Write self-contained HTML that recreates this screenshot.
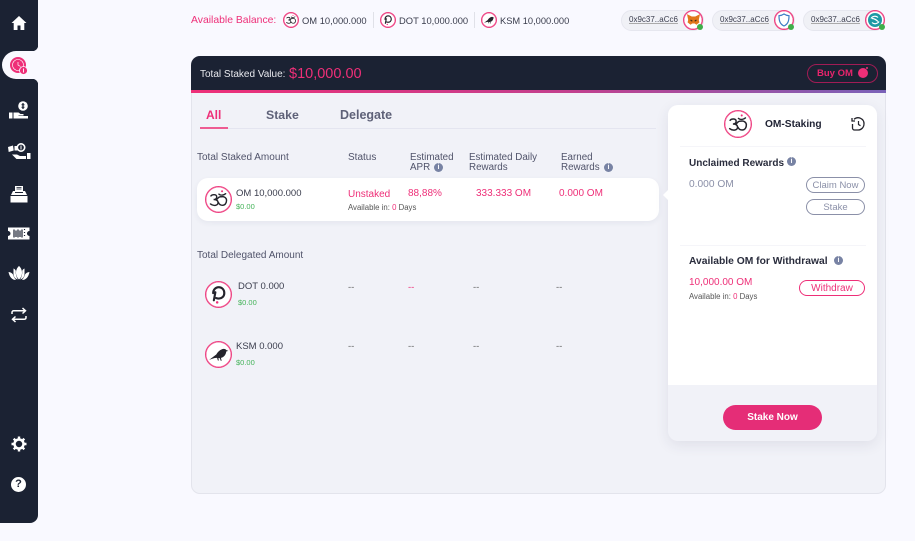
<!DOCTYPE html>
<html><head><meta charset="utf-8"><style>
html,body{margin:0;padding:0;width:915px;height:541px;overflow:hidden;background:#f9f9ff;font-family:"Liberation Sans",sans-serif;color:#3a3d4d}
div,span.a,svg{position:absolute}
.t{position:absolute;white-space:nowrap;line-height:14px;font-size:10px}
.p{color:#ee2f78}.g{color:#45b35a}.b{font-weight:700}
.m{color:#7c8198}.i{position:absolute;width:9px;height:9px;border-radius:50%;background:#7883a4;color:#fff;font:700 7px/9px "Liberation Sans",sans-serif;text-align:center}
.c{position:absolute;border:1px solid #ee3f80;border-radius:50%;background:#fff;box-sizing:border-box;box-shadow:inset 0 0 0 .4px #ee3f80}
.pill{position:absolute;box-sizing:border-box;height:16px;border-radius:8px;text-align:center;font-size:9.500px;line-height:15px;white-space:nowrap}
.w{position:absolute;width:83px;height:21px;top:10px;background:#f0f1f6;border:1px solid #e6e7ef;border-radius:11px;box-sizing:border-box}
.dot{position:absolute;width:6px;height:6px;border-radius:50%;background:#3fae4a;border:0}
.h{color:#50536a;line-height:10px;font-size:9.800px}
.u{font-size:8px;text-decoration:underline;text-decoration-color:#aaa}
</style></head><body>
<svg width="0" height="0" style="position:absolute"><defs>
<symbol id="om" viewBox="0 0 28 28"><g fill="none" stroke="#24242c" stroke-width="1.600" stroke-linecap="round"><path d="M5.500 10c1.500-2 6.500-2 6.500 1 0 2.200-2 3-3.500 3 3 0 5 1 5 3.500 0 3-4.500 4.500-8.500 1.500"/><path d="M12 14c1.500-2 3-3.500 5-3 3-.8 6 1 6 4 0 3.500-2 5.500-4.500 5.500-2.200 0-3.800-1.300-4.500-3"/><path d="M14.500 8c2 1.500 5 1.500 7.500-.5"/></g><circle cx="18" cy="4.800" r="1.100" fill="#ee2f78"/></symbol>
<symbol id="dot" viewBox="0 0 28 28"><path d="M8 12.500C8 8.500 10.800 5.800 14.300 5.800s6.200 2.700 6.200 6.500-2.700 6.200-6.200 6.200c-1 0-2-.2-2.800-.5M10.500 11.500 8.800 20.500" fill="none" stroke="#24242c" stroke-width="2.400" stroke-linecap="round"/><circle cx="12.500" cy="22.800" r="1.400" fill="#ee2f78"/></symbol>
<symbol id="ksm" viewBox="0 0 28 28"><path d="M3.500 20 11.500 14c1.800-3 4.500-5.800 8-6.300 1.600-.2 2.700.4 3.200 1.300l2.300.9-2.300.7c-.5 3.800-2.700 6.600-6 7.200l.9 3.200h-1.100l-1.100-3h-1.600l.6 2.700h-1.100l-.9-2.900c-2.700-.2-5.300.8-8.900 2.200z" fill="#24242c"/></symbol>
</defs></svg>

<!-- sidebar -->
<div style="left:0;top:0;width:38px;height:523px;background:#1b2233;border-radius:0 0 8px 0"></div>
<div style="left:2px;top:51px;width:36px;height:28px;background:#f9f9ff;border-radius:14px 0 0 14px"></div>
<div style="left:32px;top:45px;width:6px;height:6px;background:radial-gradient(circle at 0 0,#1b2233 6px,#f9f9ff 6.500px)"></div>
<div style="left:32px;top:79px;width:6px;height:6px;background:radial-gradient(circle at 0 100%,#1b2233 6px,#f9f9ff 6.500px)"></div>

<svg style="left:11px;top:15px" width="16" height="16" viewBox="0 0 16 16"><path d="M8 1 .5 8h2.200v7h3.800v-4.500h3V15h3.800V8h2.200z" fill="#fff"/></svg>
<svg style="left:9px;top:56px" width="20" height="20" viewBox="0 0 20 20"><circle cx="9" cy="9" r="8" fill="#ee2f78"/><circle cx="9" cy="9" r="5.500" fill="none" stroke="#fff" stroke-width=".6"/><path d="M9 6v3l2.500 1.500" fill="none" stroke="#fff" stroke-width=".7"/><circle cx="14.500" cy="14.500" r="4" fill="#ee2f78" stroke="#f9f9ff" stroke-width=".8"/><path d="M14.500 12.500v4" stroke="#fff" stroke-width=".9"/></svg>
<svg style="left:9px;top:101px" width="20" height="19" viewBox="0 0 20 19"><circle cx="14" cy="5" r="4.800" fill="#fff"/><path d="M14 2v6" stroke="#1b2233" stroke-width="1.300"/><path d="M12.500 3.800h3M12.500 6.200h3" stroke="#1b2233" stroke-width="1"/><rect x="0" y="11.500" width="3.500" height="6" fill="#fff"/><path d="M4.500 11.500h5l2 1.500h3v1.500h-5v.5H19v2.500H4.500z" fill="#fff"/></svg>
<svg style="left:7px;top:143px" width="24" height="17" viewBox="0 0 24 17"><path d="M1 4l5-1.500.7 5-5 1.500zM7.500 3h3v4.500h-3z" fill="#fff"/><circle cx="14" cy="4.500" r="3.700" fill="none" stroke="#fff" stroke-width="1.600"/><path d="M14 2.500v4" stroke="#fff" stroke-width="1"/><path d="M20 10h3.500v6H20zM5 11.500h5l3 1.500h6v3H9.500z" fill="#fff"/></svg>
<svg style="left:10px;top:186px" width="18" height="17" viewBox="0 0 18 17"><path d="M5 0h8v5H5z" fill="#fff"/><path d="M6.500 1.500h5M6.500 3h5" stroke="#1b2233" stroke-width=".8"/><path d="M3 5h12l2 4H1z" fill="#fff"/><path d="M5 6.500h8" stroke="#1b2233" stroke-width="1"/><path d="M.5 10h17v6.500H.5z" fill="#fff"/></svg>
<svg style="left:8px;top:227px" width="22" height="13" viewBox="0 0 22 13"><path d="M0 .5h21.500v3.500a2.500 2.500 0 0 0 0 5v3.500H0V9a2.500 2.500 0 0 0 0-5z" fill="#fff"/><path d="M6 2.500v8M8 3.500v6.500M10 2.500v8M12 3.500v6.500M14 2.500v8M16.500 2v1M16.500 5v1M16.500 8v1" stroke="#1b2233" stroke-width="1.200"/></svg>
<svg style="left:8px;top:266px" width="22" height="16" viewBox="0 0 22 16"><path d="M11 0c2.300 2 3 4.500 3 7s-1.300 5-3 6.500C9.300 12 8 9.500 8 7s.7-5 3-7z" fill="#fff"/><path d="M5.500 2.500c1.500.5 2 1.500 2.300 2.500-.3 3 .5 6 2 8.500-3-1-4.300-3-4.300-6zM16.500 2.500c-1.500.5-2 1.500-2.300 2.500.3 3-.5 6-2 8.500 3-1 4.300-3 4.300-6zM.5 6c2 .3 3.500 1 4.500 2.500.5 2 1.500 3.500 3 5.500-4 0-6.500-3-7.500-8zM21.500 6c-2 .3-3.500 1-4.500 2.500-.5 2-1.500 3.500-3 5.500 4 0 6.500-3 7.500-8z" fill="#fff"/></svg>
<svg style="left:11px;top:307px" width="16" height="16" viewBox="0 0 16 16"><path d="M1 7V5.500c0-1 .7-1.700 1.700-1.700H14M11.500 1 14.500 3.800 11.500 6.500M15 9v1.500c0 1-.7 1.700-1.700 1.700H2M4.500 9.500 1.500 12.200 4.500 15" fill="none" stroke="#fff" stroke-width="1.500"/></svg>
<svg style="left:11px;top:436px" width="16" height="16" viewBox="0 0 16 16"><circle cx="8" cy="8" r="4.500" fill="none" stroke="#fff" stroke-width="2.500"/><path d="M8 .5v3M8 12.500v3M.5 8h3M12.500 8h3M2.700 2.700l2.100 2.100M11.200 11.200l2.100 2.100M13.300 2.700l-2.100 2.100M4.800 11.200l-2.100 2.100" stroke="#fff" stroke-width="2.400"/></svg>
<div style="left:11px;top:477px;width:15px;height:15px;border-radius:50%;background:#fff;color:#1b2233;font:700 11px/15px 'Liberation Sans',sans-serif;text-align:center">?</div>

<!-- top balances -->
<span class="t p" style="left:191px;top:14px;font-size:10.400px">Available Balance:</span>
<div class="c" style="left:283px;top:12px;width:16px;height:16px"><svg style="left:0;top:0" width="14" height="14"><use href="#om"/></svg></div>
<span class="t" style="left:302px;top:14px;font-size:9.400px">OM 10,000.000</span>
<div style="left:373px;top:12px;width:1px;height:16px;background:#e0e1e8"></div>
<div class="c" style="left:380px;top:12px;width:16px;height:16px"><svg style="left:0;top:0" width="14" height="14"><use href="#dot"/></svg></div>
<span class="t" style="left:399px;top:14px;font-size:9.400px">DOT 10,000.000</span>
<div style="left:474px;top:12px;width:1px;height:16px;background:#e0e1e8"></div>
<div class="c" style="left:481px;top:12px;width:16px;height:16px"><svg style="left:0;top:0" width="14" height="14"><use href="#ksm"/></svg></div>
<span class="t" style="left:500px;top:14px;font-size:9.300px">KSM 10,000.000</span>

<!-- wallets -->
<div class="w" style="left:621px"></div>
<span class="t u" style="left:629px;top:13px">0x9c37..aCc6</span>
<div class="c" style="left:683px;top:10px;width:20px;height:20px"></div>
<svg style="left:687px;top:14px" width="13" height="12" viewBox="0 0 11 10"><path d="M0 0l4 2h3l4-2-1 5 .5 2-2.500 2-1.500-1h-2l-1.500 1L.5 7 1 5z" fill="#e2761b"/><path d="M3 5l1.500 1M8 5 6.500 6" stroke="#3a2a1a" stroke-width=".9"/></svg>
<div class="dot" style="left:697px;top:24px"></div>

<div class="w" style="left:712px"></div>
<span class="t u" style="left:720px;top:13px">0x9c37..aCc6</span>
<div class="c" style="left:774px;top:10px;width:20px;height:20px"></div>
<svg style="left:778px;top:13px" width="12" height="14" viewBox="0 0 12 14"><path d="M6 1c1.500 1 3.500 1.700 5 1.700C11 8 10 11 6 13 2 11 1 8 1 2.700 2.500 2.700 4.500 2 6 1z" fill="none" stroke="#3b7cc4" stroke-width="1.200"/></svg>
<div class="dot" style="left:788px;top:24px"></div>

<div class="w" style="left:803px;width:82px"></div>
<span class="t u" style="left:811px;top:13px">0x9c37..aCc6</span>
<div class="c" style="left:865px;top:10px;width:20px;height:20px"></div>
<svg style="left:868px;top:13px" width="14" height="14" viewBox="0 0 14 14"><circle cx="7" cy="7" r="7" fill="#1f9aa5"/><path d="M3 5.500c1.500-2.500 5-3 7-1M11 8.500c-1.500 2.500-5 3-7 1M4 5.500c2 0 4 1 6 3" fill="none" stroke="#fff" stroke-width="1.200"/></svg>
<div class="dot" style="left:879px;top:24px"></div>

<!-- main card -->
<div style="left:191px;top:56px;width:695px;height:438px;box-sizing:border-box;background:#f1f2f8;border:1px solid #e3e4ec;border-radius:9px"></div>
<div style="left:191px;top:56px;width:695px;height:34px;background:#1b2233;border-radius:9px 9px 0 0"></div>
<div style="left:191px;top:90px;width:695px;height:3px;background:linear-gradient(90deg,#ee2f78,#c2408e 55%,#7a62b8)"></div>
<span class="t" style="left:200px;top:68px;color:#e8e9ee;font-size:10px">Total Staked Value:</span>
<span class="t p" style="left:289px;top:67px;font-size:14.500px;line-height:15px">$10,000.00</span>
<div style="left:807px;top:64px;width:71px;height:19px;box-sizing:border-box;border:1px solid #a11c55;border-radius:10px"></div>
<span class="t p b" style="left:817px;top:67px;font-size:9.500px;color:#e8246c">Buy OM</span>
<div style="left:858px;top:68px;width:10px;height:10px;border-radius:50%;background:#ee2f78"></div>
<div style="left:866px;top:67px;width:2px;height:2px;border-radius:50%;background:#ee2f78"></div>

<!-- tabs -->
<span class="t p b" style="left:206px;top:108px;font-size:12px">All</span>
<span class="t b" style="left:266px;top:108px;font-size:12.300px;color:#5e6178">Stake</span>
<span class="t b" style="left:340px;top:108px;font-size:12.500px;color:#5e6178">Delegate</span>
<div style="left:200px;top:128px;width:456px;height:1px;background:#e4e5f0"></div>
<div style="left:200px;top:127px;width:28px;height:2px;background:#ee5c92"></div>

<!-- table head -->
<span class="t" style="left:197px;top:151px;color:#50536a">Total Staked Amount</span>
<span class="t" style="left:348px;top:151px;color:#50536a">Status</span>
<span class="t h" style="left:410px;top:153px">Estimated<br>APR</span>
<div class="i" style="left:434px;top:163px">i</div>
<span class="t h" style="left:469px;top:153px">Estimated Daily<br>Rewards</span>
<span class="t h" style="left:561px;top:153px">Earned<br>Rewards</span>
<div class="i" style="left:604px;top:163px">i</div>

<!-- OM row -->
<div style="left:197px;top:178px;width:462px;height:43px;background:#fff;border-radius:11px;box-shadow:0 2px 6px rgba(40,45,80,.06)"></div>
<div class="c" style="left:205px;top:186px;width:27px;height:27px"><svg style="left:0;top:0" width="25" height="25"><use href="#om"/></svg></div>
<span class="t" style="left:236px;top:187px;font-size:9.500px">OM 10,000.000</span>
<span class="t g" style="left:236px;top:200px;font-size:7.500px">$0.00</span>
<span class="t p" style="left:348px;top:188px">Unstaked</span>
<span class="t" style="left:348px;top:201px;font-size:7.800px;color:#555">Available in: <span class="p">0</span> Days</span>
<span class="t p" style="left:408px;top:187px">88,88%</span>
<span class="t p" style="left:476px;top:187px">333.333 OM</span>
<span class="t p" style="left:559px;top:187px">0.000 OM</span>

<!-- delegated -->
<span class="t" style="left:197px;top:249px;color:#50536a">Total Delegated Amount</span>
<div class="c" style="left:205px;top:281px;width:27px;height:27px"><svg style="left:0;top:0" width="25" height="25"><use href="#dot"/></svg></div>
<span class="t" style="left:238px;top:280px;font-size:9.500px">DOT 0.000</span>
<span class="t g" style="left:238px;top:296px;font-size:7.500px">$0.00</span>
<div class="c" style="left:205px;top:341px;width:27px;height:27px"><svg style="left:0;top:0" width="25" height="25"><use href="#ksm"/></svg></div>
<span class="t" style="left:236px;top:340px;font-size:9.500px">KSM 0.000</span>
<span class="t g" style="left:236px;top:356px;font-size:7.500px">$0.00</span>
<span class="t" style="left:348px;top:281px;font-size:9.500px;color:#666">--</span>
<span class="t" style="left:408px;top:281px;font-size:9.500px;color:#ee2f78">--</span>
<span class="t" style="left:473px;top:281px;font-size:9.500px;color:#666">--</span>
<span class="t" style="left:556px;top:281px;font-size:9.500px;color:#666">--</span>
<span class="t" style="left:348px;top:340px;font-size:9.500px;color:#666">--</span>
<span class="t" style="left:408px;top:340px;font-size:9.500px;color:#666">--</span>
<span class="t" style="left:473px;top:340px;font-size:9.500px;color:#666">--</span>
<span class="t" style="left:556px;top:340px;font-size:9.500px;color:#666">--</span>

<!-- panel -->
<div style="left:668px;top:105px;width:209px;height:336px;background:#f1f2f8;border-radius:10px;box-shadow:0 4px 14px rgba(40,45,80,.09)"></div>
<div style="left:668px;top:105px;width:209px;height:280px;background:#fff;border-radius:10px 10px 0 0"></div>
<div style="left:663px;top:190px;width:0;height:0;border:5px solid transparent;border-left:0;border-right:5px solid #fff"></div>
<div class="c" style="left:724px;top:110px;width:28px;height:28px"><svg style="left:0;top:0" width="26" height="26"><use href="#om"/></svg></div>
<span class="t b" style="left:765px;top:118px;font-size:10.200px;color:#1f2233">OM-Staking</span>
<svg style="left:851px;top:117px" width="14" height="14" viewBox="0 0 14 14"><path d="M3 2.300A6 6 0 0 1 13 7a6 6 0 0 1-6 6H3.500a2 2 0 0 1-2-2V7" fill="none" stroke="#24242c" stroke-width="1.300"/><path d="M1 1v3h3" fill="none" stroke="#24242c" stroke-width="1.300"/><path d="M7.500 4v3.500l2 1.200" fill="none" stroke="#24242c" stroke-width="1.200"/></svg>
<div style="left:680px;top:146px;width:186px;height:1px;background:#f5f5f9"></div>
<span class="t b" style="left:689px;top:157px;color:#2a2d3d">Unclaimed Rewards</span>
<div class="i" style="left:787px;top:157px">i</div>
<span class="t" style="left:689px;top:178px;font-size:10.200px;color:#8b90a8">0.000 OM</span>
<div class="pill" style="left:806px;top:177px;width:59px;border:1px solid #8b90a8;color:#8b90a8">Claim Now</div>
<div class="pill" style="left:806px;top:199px;width:59px;border:1px solid #8b90a8;color:#8b90a8">Stake</div>
<div style="left:680px;top:245px;width:186px;height:1px;background:#f5f5f9"></div>
<span class="t b" style="left:689px;top:255px;color:#2a2d3d;font-size:10.300px">Available OM for Withdrawal</span>
<div class="i" style="left:834px;top:256px">i</div>
<span class="t p" style="left:689px;top:276px;font-size:10px">10,000.00 OM</span>
<span class="t" style="left:689px;top:290px;font-size:7.800px;color:#555">Available in: <span class="p">0</span> Days</span>
<div class="pill p" style="left:799px;top:280px;width:66px;border:1px solid #ee2f78;font-size:10px">Withdraw</div>
<div style="left:723px;top:405px;width:99px;height:25px;background:#e52d77;border-radius:13px;color:#fff;font:700 10px/26px 'Liberation Sans',sans-serif;text-align:center">Stake Now</div>
</body></html>
